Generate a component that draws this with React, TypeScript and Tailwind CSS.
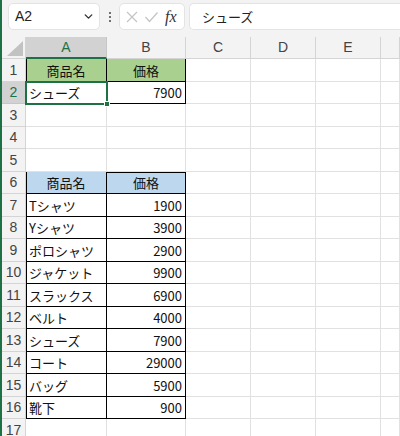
import { ChevronDown } from 'lucide-react';

type Cell = { text?: string; align?: 'left' | 'right' | 'center'; fill?: string; border?: boolean };

const COLS = ['A', 'B', 'C', 'D', 'E', ''];
const COL_W = ['w-[81px]', 'w-[79px]', 'w-[65px]', 'w-[65px]', 'w-[65px]', 'flex-1'];

const items: [string, number][] = [
  ['Tシャツ', 1900],
  ['Yシャツ', 3900],
  ['ポロシャツ', 2900],
  ['ジャケット', 9900],
  ['スラックス', 6900],
  ['ベルト', 4000],
  ['シューズ', 7900],
  ['コート', 29000],
  ['バッグ', 5900],
  ['靴下', 900],
];

function buildRows(): Cell[][] {
  const rows: Cell[][] = [];
  rows.push([
    { text: '商品名', align: 'center', fill: 'green', border: true },
    { text: '価格', align: 'center', fill: 'green', border: true },
  ]);
  rows.push([
    { text: 'シューズ', border: true },
    { text: '7900', align: 'right', border: true },
  ]);
  rows.push([], [], []);
  rows.push([
    { text: '商品名', align: 'center', fill: 'blue', border: true },
    { text: '価格', align: 'center', fill: 'blue', border: true },
  ]);
  items.forEach(([name, price]) => {
    rows.push([
      { text: name, border: true },
      { text: String(price), align: 'right', border: true },
    ]);
  });
  rows.push([]);
  return rows;
}

function GridCell({ cell, col, row, aboveBordered }: { cell?: Cell; col: number; row: number; aboveBordered: boolean }) {
  const bordered = !!cell?.border;
  const fill =
    cell?.fill === 'green' ? 'bg-[#a9d08e]' : cell?.fill === 'blue' ? 'bg-[#bdd7ee]' : 'bg-white';
  const rightColor = bordered ? 'border-r-black' : 'border-r-[#e1e1e1]';
  const bottomColor = bordered ? 'border-b-black' : 'border-b-[#e1e1e1]';
  const align =
    cell?.align === 'right' ? 'justify-end pr-[3px]' : cell?.align === 'center' ? 'justify-center' : 'justify-start pl-[3px]';
  const leftEdge = bordered && col === 0 ? 'shadow-[inset_1px_0_0_#000]' : '';
  const topEdge = bordered && !aboveBordered && row > 0 ? 'shadow-[inset_0_1px_0_#000]' : '';
  return (
    <div
      className={`${COL_W[col]} shrink-0 h-full border-r border-b ${rightColor} ${bottomColor} ${fill} ${leftEdge} ${topEdge} flex items-center pt-[1px] ${align} text-[13px] text-[#111] whitespace-nowrap overflow-hidden`}
    >
      {cell?.text}
    </div>
  );
}

export default function App() {
  const rows = buildRows();
  return (
    <div
      className="w-[400px] h-[436px] overflow-hidden bg-white border-l-2 border-[#1e7145] flex flex-col"
      style={{ fontFamily: '"Noto Sans CJK JP", "Noto Sans", sans-serif' }}
    >
      {/* formula bar */}
      <div className="h-[37px] shrink-0 bg-[#f3f3f3] flex items-start pt-[3px]">
        <div className="ml-[6px] w-[92px] h-[27px] bg-white border border-[#e3e3e3] rounded-[5px] flex items-center pl-[6px] pr-[4px]">
          <span className="text-[14px] text-[#222] flex-1" style={{ fontFamily: '"Liberation Sans", sans-serif' }}>
            A2
          </span>
          <ChevronDown size={13} strokeWidth={2.6} className="text-[#333]" />
        </div>
        <div className="w-[19px] h-[27px] flex flex-col items-center justify-center gap-[2px]">
          <span className="w-[2px] h-[2px] bg-[#444] rounded-full" />
          <span className="w-[2px] h-[2px] bg-[#444] rounded-full" />
          <span className="w-[2px] h-[2px] bg-[#444] rounded-full" />
        </div>
        <div className="w-[66px] h-[27px] bg-white border border-[#e3e3e3] rounded-[5px] flex items-center pl-[5px] gap-[5px]">
          <svg width="14" height="14" viewBox="0 0 14 14">
            <path d="M2 2 L12 12 M12 2 L2 12" stroke="#c4c4c4" strokeWidth="1.2" fill="none" />
          </svg>
          <svg width="15" height="14" viewBox="0 0 15 14">
            <path d="M1.5 7 L5.5 11.5 L13.5 2.5" stroke="#c4c4c4" strokeWidth="1.2" fill="none" />
          </svg>
          <span
            className="text-[16px] italic text-[#333] leading-none ml-[1px]"
            style={{ fontFamily: '"Liberation Serif", serif' }}
          >
            fx
          </span>
        </div>
        <div className="ml-[4px] flex-1 h-[27px] bg-white border border-r-0 border-[#e3e3e3] rounded-l-[5px] flex items-center pl-[12px] text-[13px] text-[#222]">
          シューズ
        </div>
      </div>

      {/* column headers */}
      <div className="h-[22px] shrink-0 flex bg-[#f3f3f3]" style={{ fontFamily: '"Liberation Sans", sans-serif' }}>
        <div className="w-[24px] shrink-0 h-full border-r border-b border-[#d4d4d4] flex items-end justify-end pr-[2px] pb-[2px]">
          <svg width="16" height="15" viewBox="0 0 16 15">
            <path d="M16 0 L16 15 L0 15 Z" fill="#c2c2c2" />
          </svg>
        </div>
        {COLS.map((c, i) => (
          <div
            key={i}
            className={`${COL_W[i]} shrink-0 h-full border-r flex items-center justify-center text-[14px] ${
              i === 0
                ? 'bg-[#d2d2d2] text-[#1e7145] border-r-[#c6c6c6] border-b-2 border-b-[#1e7145]'
                : 'text-[#444] border-r-[#d4d4d4] border-b border-b-[#d4d4d4]'
            }`}
          >
            {c}
          </div>
        ))}
      </div>

      {/* rows */}
      <div className="relative flex-1">
        {rows.map((r, ri) => {
          const aboveBordered = ri > 0 && !!rows[ri - 1][0]?.border;
          return (
            <div key={ri} className={`${ri % 2 === 0 ? 'h-[23px]' : 'h-[22px]'} flex`}>
              <div
                className={`w-[24px] shrink-0 h-full border-r border-b flex items-center justify-center text-[14px] ${
                  ri === 1
                    ? 'bg-[#d2d2d2] text-[#1e7145] border-r-[#1e7145] border-b-[#c6c6c6]'
                    : 'bg-[#f3f3f3] text-[#444] border-[#d4d4d4]'
                }`}
                style={{ fontFamily: '"Liberation Sans", sans-serif' }}
              >
                {ri + 1}
              </div>
              {COLS.map((_, ci) => (
                <GridCell key={ci} cell={r[ci]} col={ci} row={ri} aboveBordered={aboveBordered} />
              ))}
            </div>
          );
        })}
        {/* selection on A2 */}
        <div className="absolute left-[23px] top-[22px] w-[83px] h-[24px] border-2 border-[#1e7145] pointer-events-none" />
        <div className="absolute left-[102px] top-[42px] w-[6px] h-[6px] bg-[#1e7145] border border-white pointer-events-none" />
      </div>
    </div>
  );
}
